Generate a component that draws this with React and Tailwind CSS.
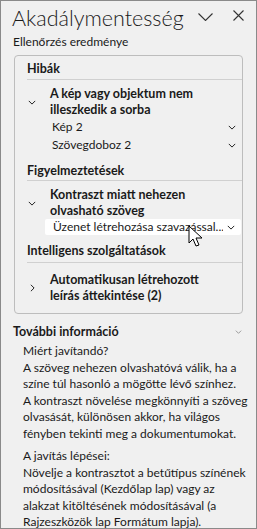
import React from "react";

const Chev = ({ className = "" }) => (
  <svg width="10" height="6" viewBox="0 0 10 6" className={className} fill="none" stroke="currentColor" strokeWidth="1.2">
    <path d="M1 1l4 4 4-4" />
  </svg>
);
const ChevR = ({ className = "" }) => (
  <svg width="6" height="10" viewBox="0 0 6 10" className={className} fill="none" stroke="currentColor" strokeWidth="1.2">
    <path d="M1 1l4 4-4 4" />
  </svg>
);

const p1 = [
  "A szöveg nehezen olvashatóvá válik, ha a",
  "színe túl hasonló a mögötte lévő színhez.",
  "A kontraszt növelése megkönnyíti a szöveg",
  "olvasását, különösen akkor, ha világos",
  "fényben tekinti meg a dokumentumokat.",
];
const p2 = [
  "Növelje a kontrasztot a betűtípus színének",
  "módosításával (Kezdőlap lap) vagy az",
  "alakzat kitöltésének módosításával (a",
  "Rajzeszközök lap Formátum lapja).",
];

export default function App() {
  return (
    <div
      className="relative w-[257px] h-[529px] bg-[#f0f0f0] border border-[#8a8a8a] text-[#1a1a1a] overflow-hidden"
      style={{ fontFamily: 'Lato, "Liberation Sans", sans-serif' }}
    >
      {/* header */}
      <div className="flex items-start h-[34px] pl-[11px] pr-[12px] pt-[3px]">
        <div className="text-[21.5px] font-light leading-[28px] flex-1">Akadálymentesség</div>
        <svg width="15" height="8" viewBox="0 0 15 8" className="text-[#333] mt-[9px] mr-[20px]" fill="none" stroke="currentColor" strokeWidth="1.1">
          <path d="M0.5 0.5l7 7 7-7" />
        </svg>
        <svg width="11" height="11" viewBox="0 0 11 11" className="text-[#333] mt-[6px]" stroke="currentColor" strokeWidth="1.1">
          <path d="M0.5 0.5l10 10M10.5 0.5l-10 10" />
        </svg>
      </div>
      <div className="pl-[12px] text-[12px] leading-[16px] -mt-[1px]">Ellenőrzés eredménye</div>

      {/* card */}
      <div className="mx-[13px] mt-[5px] border border-[#bdbdbd] rounded-[4px] pt-[5px] pb-[9px] pl-[12px]">
        <div className="text-[12.5px] font-bold leading-[16px] pb-[2px] border-b border-[#d0d0d0]">Hibák</div>

        <div className="flex items-center pt-[6px]">
          <Chev className="w-[8px] h-[5px] ml-[1px] mr-[14px] shrink-0" />
          <div className="text-[12.5px] font-bold leading-[16px]">A kép vagy objektum nem<br />illeszkedik a sorba</div>
        </div>
        <div className="flex items-center pl-[25px] pr-[6px] h-[18px] text-[12px]">
          <span className="flex-1">Kép 2</span>
          <Chev className="w-[8px] h-[5px]" />
        </div>
        <div className="flex items-center pl-[25px] pr-[6px] h-[18px] text-[12px]">
          <span className="flex-1">Szövegdoboz 2</span>
          <Chev className="w-[8px] h-[5px]" />
        </div>

        <div className="text-[12.5px] font-bold leading-[16px] pt-[9px] pb-[1px] border-b border-[#d0d0d0]">Figyelmeztetések</div>
        <div className="flex items-center pt-[6px]">
          <Chev className="w-[8px] h-[5px] ml-[1px] mr-[14px] shrink-0" />
          <div className="text-[12.5px] font-bold leading-[16px]">Kontraszt miatt nehezen<br />olvasható szöveg</div>
        </div>
        <div className="flex items-center ml-[18px] mr-[1px] pl-[8px] pr-[6px] h-[16px] text-[12px] bg-white rounded-[2px]">
          <span className="flex-1 whitespace-nowrap overflow-hidden">Üzenet létrehozása szavazással...</span>
          <Chev className="w-[8px] h-[5px] ml-[4px]" />
        </div>

        <div className="text-[12.5px] font-bold leading-[16px] pt-[8px] pb-[3px] border-b border-[#d0d0d0]">Intelligens szolgáltatások</div>
        <div className="flex items-center pt-[9px]">
          <ChevR className="w-[5px] h-[8px] ml-[3px] mr-[15px] shrink-0" />
          <div className="text-[12.5px] font-bold leading-[16px]">Automatikusan létrehozott<br />leírás áttekintése (2)</div>
        </div>
      </div>

      {/* more info */}
      <div className="flex items-center pl-[12px] pr-[14px] mt-[9px] h-[18px]">
        <span className="flex-1 text-[12.5px] font-bold">További információ</span>
        <Chev className="w-[7px] h-[4px] text-[#888]" />
      </div>
      <div className="pl-[22px] pr-[4px] text-[12px] leading-[16.5px]">
        <div className="mt-[2px]">Miért javítandó?</div>
        <p className="mt-[0px]">
          {p1.map((l) => (
            <span key={l} className="block whitespace-nowrap">{l}</span>
          ))}
        </p>
        <div className="mt-[6px]">A javítás lépései:</div>
        <p className="mt-[0px]">
          {p2.map((l) => (
            <span key={l} className="block whitespace-nowrap">{l}</span>
          ))}
        </p>
      </div>

      {/* cursor */}
      <svg className="absolute left-[187px] top-[224px]" width="16" height="24" viewBox="0 0 16 24">
        <path d="M1 1 L1 18 L5 14 L8 21 L11 20 L8 13 L14 13 Z" fill="white" stroke="black" strokeWidth="1" strokeLinejoin="round" />
      </svg>
    </div>
  );
}
